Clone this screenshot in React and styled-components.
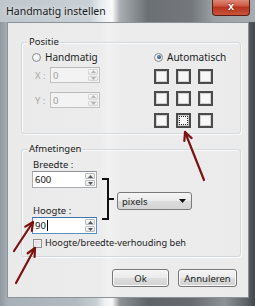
import React from "react";
import styled, { createGlobalStyle } from "styled-components";

const GlobalStyle = createGlobalStyle`
  html, body {
    margin: 0;
    padding: 0;
    background: #ffffff;
  }
  body {
    font-family: "Noto Sans", "Open Sans", sans-serif;
    color: #1b1b1b;
  }
`;

const arrows = [
  { from: [204, 180], to: [185, 132] },
  { from: [14, 251], to: [33, 222] },
  { from: [16, 283], to: [35, 248] },
];

function barbs(from, to, len = 9, spread = 0.45) {
  const dx = from[0] - to[0];
  const dy = from[1] - to[1];
  const a = Math.atan2(dy, dx);
  const p1 = [to[0] + len * Math.cos(a + spread), to[1] + len * Math.sin(a + spread)];
  const p2 = [to[0] + len * Math.cos(a - spread), to[1] + len * Math.sin(a - spread)];
  return `M${p1[0]} ${p1[1]} L${to[0]} ${to[1]} L${p2[0]} ${p2[1]}`;
}

function SpinBox({ value, width, height, disabled, focused }) {
  return (
    <Spin $width={width} $height={height} $disabled={disabled} $focused={focused}>
      <SpinText $disabled={disabled}>
        {value}
        {focused && <Caret />}
      </SpinText>
      <SpinButtons>
        <SpinButton $disabled={disabled}>
          <svg width="5" height="3" viewBox="0 0 5 3">
            <path d="M0 3 L2.5 0 L5 3 Z" fill={disabled ? "#b5b5b5" : "#555"} />
          </svg>
        </SpinButton>
        <SpinButton $disabled={disabled}>
          <svg width="5" height="3" viewBox="0 0 5 3">
            <path d="M0 0 L2.5 3 L5 0 Z" fill={disabled ? "#b5b5b5" : "#555"} />
          </svg>
        </SpinButton>
      </SpinButtons>
    </Spin>
  );
}

export default function App() {
  return (
    <>
      <GlobalStyle />
      <Window>
        <TitleBar>
          <Title>Handmatig instellen</Title>
          <CloseButton>x</CloseButton>
        </TitleBar>
        <Frame>
          <Client>
            <Positie>
              <Legend>Positie</Legend>
              <LeftCol>
                <RadioRow>
                  <Radio />
                  <RadioText>Handmatig</RadioText>
                </RadioRow>
                <AxisRow>
                  <AxisLabel>X :</AxisLabel>
                  <SpinBox value="0" width={50} height={16} disabled />
                </AxisRow>
                <AxisRow $gap={9}>
                  <AxisLabel>Y :</AxisLabel>
                  <SpinBox value="0" width={50} height={16} disabled />
                </AxisRow>
              </LeftCol>
              <RightCol>
                <RadioRow>
                  <Radio $checked />
                  <RadioText>Automatisch</RadioText>
                </RadioRow>
                <AnchorGrid>
                  {Array.from({ length: 9 }).map((_, i) => (
                    <Anchor key={i} $selected={i === 7} />
                  ))}
                </AnchorGrid>
              </RightCol>
            </Positie>

            <Afmetingen>
              <Legend>Afmetingen</Legend>
              <SizeRow>
                <Fields>
                  <FieldLabel>Breedte :</FieldLabel>
                  <SpinBox value="600" width={65} height={17} />
                  <FieldLabel $gap={17}>Hoogte :</FieldLabel>
                  <SpinBox value="90" width={65} height={17} focused />
                </Fields>
                <Bracket />
                <Select>
                  <span>pixels</span>
                  <svg width="7" height="4" viewBox="0 0 7 4">
                    <path d="M0 0 L7 0 L3.5 4 Z" fill="#111" />
                  </svg>
                </Select>
              </SizeRow>
              <CheckRow>
                <CheckBox />
                <CheckText>Hoogte/breedte-verhouding behouden</CheckText>
              </CheckRow>
            </Afmetingen>

            <ButtonRow>
              <Button $width={57}>Ok</Button>
              <Button $width={59}>Annuleren</Button>
            </ButtonRow>
          </Client>
        </Frame>

        <Annotations width="255" height="306" viewBox="0 0 255 306">
          {arrows.map((a, i) => (
            <g key={i} stroke="#7c1212" strokeWidth="2.2" fill="none" strokeLinecap="round">
              <path d={`M${a.from[0]} ${a.from[1]} L${a.to[0]} ${a.to[1]}`} />
              <path d={barbs(a.from, a.to)} strokeLinejoin="round" />
            </g>
          ))}
        </Annotations>
      </Window>
    </>
  );
}

// ==== window chrome ====
const Window = styled.div`
  position: relative;
  width: 255px;
  height: 306px;
  display: flex;
  flex-direction: column;
  overflow: hidden;
  background: linear-gradient(
    90deg,
    #8f989e 0%,
    #a7b0b6 3%,
    #b3bbc0 30%,
    #c9d0d4 38%,
    #eef1f2 41%,
    #f7f8f9 44%,
    #8d9296 47%,
    #5f6469 58%,
    #676b6f 75%,
    #8c9296 88%,
    #5b6065 97%,
    #43474b 100%
  );
`;

const TitleBar = styled.div`
  height: 22px;
  display: flex;
  align-items: flex-start;
  padding-left: 6px;
  background: linear-gradient(
    90deg,
    #bfc7cc 0%,
    #c9d0d5 35%,
    #e9edef 40%,
    #fafbfb 44%,
    #a9aeb2 47%,
    #6b7075 58%,
    #74787c 75%,
    #9ba1a5 84%,
    #a6acb0 100%
  );
`;

const Title = styled.div`
  font-size: 10.5px;
  line-height: 22px;
  color: #1a1a1a;
  text-shadow: 0 0 6px rgba(255, 255, 255, 0.9);
`;

const CloseButton = styled.div`
  margin-left: auto;
  margin-right: 5px;
  margin-top: -2px;
  width: 38px;
  height: 18px;
  box-sizing: border-box;
  border: 1px solid #5a1c15;
  border-top: none;
  border-radius: 0 0 4px 4px;
  background: linear-gradient(180deg, #e09a8c 0%, #cf5a45 45%, #b83420 55%, #c9553c 100%);
  color: #ffffff;
  font-family: "Liberation Sans", sans-serif;
  font-weight: bold;
  font-size: 11px;
  line-height: 16px;
  text-align: center;
  text-shadow: 0 0 2px #5a1008;
`;

const Frame = styled.div`
  flex: 1;
  display: flex;
  padding: 0 6px 8px 7px;
`;

const Client = styled.div`
  flex: 1;
  display: flex;
  flex-direction: column;
  border: 1px solid #8a939a;
  background: linear-gradient(
    90deg,
    #eaeaea 0%,
    #ececec 38%,
    #f1f1f1 42%,
    #ececec 47%,
    #ebebeb 100%
  );
  padding: 19px 7px 10px 13px;
`;

// ==== group boxes ====
const Group = styled.div`
  position: relative;
  box-sizing: border-box;
  border: 1px solid #d3d8dc;
  border-radius: 3px;
  box-shadow: inset 1px 1px 0 #fbfbfb, 1px 1px 0 #fbfbfb;
  padding: 9px 0 0 10px;
`;

const Positie = styled(Group)`
  height: 92px;
  display: flex;
`;

const Afmetingen = styled(Group)`
  height: 108px;
  margin-top: 15px;
  display: flex;
  flex-direction: column;
`;

const Legend = styled.span`
  position: absolute;
  top: -7px;
  left: 6px;
  padding: 0 1px;
  background: #ececec;
  font-size: 9.5px;
  line-height: 12px;
`;

const LeftCol = styled.div`
  width: 122px;
  display: flex;
  flex-direction: column;
`;

const RightCol = styled.div`
  display: flex;
  flex-direction: column;
`;

const RadioRow = styled.div`
  height: 10px;
  display: flex;
  align-items: center;
  gap: 4px;
`;

const Radio = styled.span`
  position: relative;
  width: 9px;
  height: 9px;
  box-sizing: border-box;
  border-radius: 50%;
  border: 1px solid #8b8d8f;
  background: radial-gradient(circle at 40% 40%, #ffffff 0%, #dcdcdc 100%);

  &::after {
    content: "";
    display: ${(p) => (p.$checked ? "block" : "none")};
    position: absolute;
    left: 1.5px;
    top: 1.5px;
    width: 4px;
    height: 4px;
    border-radius: 50%;
    background: radial-gradient(circle at 40% 35%, #6f9cc4 0%, #1f3f5f 80%);
  }
`;

const RadioText = styled.span`
  font-size: 10px;
  line-height: 10px;
`;

const AxisRow = styled.div`
  display: flex;
  align-items: center;
  margin-top: ${(p) => p.$gap || 5}px;
`;

const AxisLabel = styled.span`
  width: 15px;
  padding-left: 3px;
  font-size: 9.5px;
  color: #a9a9a9;
`;

// ==== spin boxes ====
const Spin = styled.div`
  width: ${(p) => p.$width}px;
  height: ${(p) => p.$height}px;
  box-sizing: border-box;
  display: flex;
  border: 1px solid ${(p) => (p.$focused ? "#5d8fc0" : p.$disabled ? "#bfc2c5" : "#a9adb2")};
  border-top-color: ${(p) => (p.$focused ? "#3d74ad" : p.$disabled ? "#b6babd" : "#8e9297")};
  background: ${(p) => (p.$disabled ? "#f3f3f3" : "#ffffff")};
`;

const SpinText = styled.div`
  flex: 1;
  display: flex;
  align-items: center;
  padding-left: 2px;
  font-size: 9.5px;
  color: ${(p) => (p.$disabled ? "#9c9c9c" : "#111")};
`;

const Caret = styled.span`
  width: 1px;
  height: 11px;
  margin-left: 1px;
  background: #000;
`;

const SpinButtons = styled.div`
  width: 10px;
  display: flex;
  flex-direction: column;
  gap: 1px;
  padding: 1px 1px 1px 0;
`;

const SpinButton = styled.div`
  flex: 1;
  display: flex;
  align-items: center;
  justify-content: center;
  border: 1px solid ${(p) => (p.$disabled ? "#d4d6d8" : "#b9bcc0")};
  border-radius: 1px;
  background: linear-gradient(180deg, #fafafa 0%, #e6e6e6 100%);
`;

// ==== anchor grid ====
const AnchorGrid = styled.div`
  margin-top: 7px;
  display: grid;
  grid-template-columns: repeat(3, 15px);
  grid-auto-rows: 15px;
  gap: 7px;
`;

const Anchor = styled.div`
  position: relative;
  box-sizing: border-box;
  border: 2px solid #4b4b4b;
  box-shadow: inset 0 0 0 1px #d0d0d0;
  background: #f7f7f7;

  &::after {
    content: "";
    display: ${(p) => (p.$selected ? "block" : "none")};
    position: absolute;
    inset: 1px;
    border: 1px dotted #222;
  }
`;

// ==== size fields ====
const SizeRow = styled.div`
  display: flex;
  align-items: flex-start;
`;

const Fields = styled.div`
  display: flex;
  flex-direction: column;
`;

const FieldLabel = styled.div`
  height: 12px;
  margin-top: ${(p) => p.$gap || 0}px;
  padding-left: 1px;
  font-size: 9.5px;
  line-height: 12px;
`;

const Bracket = styled.div`
  position: relative;
  margin-left: 5px;
  margin-top: 19px;
  width: 7px;
  height: 42px;
  box-sizing: border-box;
  border: 2px solid #111;
  border-left: none;

  &::after {
    content: "";
    position: absolute;
    right: -7px;
    top: 18px;
    width: 6px;
    height: 2px;
    background: #111;
  }
`;

const Select = styled.div`
  margin-left: 8px;
  margin-top: 33px;
  width: 75px;
  height: 18px;
  box-sizing: border-box;
  display: flex;
  align-items: center;
  justify-content: space-between;
  padding: 0 5px 0 4px;
  border: 1px solid #7a7a7a;
  border-radius: 3px;
  background: linear-gradient(180deg, #f6f6f6 0%, #ebebeb 48%, #dcdcdc 52%, #d4d4d4 100%);
  font-size: 9.5px;
`;

const CheckRow = styled.div`
  margin-top: 3px;
  padding-left: 1px;
  display: flex;
  align-items: center;
  gap: 3px;
`;

const CheckBox = styled.span`
  width: 9px;
  height: 9px;
  box-sizing: border-box;
  border: 1px solid #8e8f90;
  background: linear-gradient(135deg, #d8d8d8 0%, #f4f4f4 100%);
  box-shadow: inset 0 0 0 1px #f0f0f0;
`;

const CheckText = styled.span`
  width: 141px;
  overflow: hidden;
  white-space: nowrap;
  font-size: 9.2px;
  line-height: 12px;
`;

// ==== buttons ====
const ButtonRow = styled.div`
  margin-top: 12px;
  padding-right: 4px;
  display: flex;
  justify-content: flex-end;
  gap: 9px;
`;

const Button = styled.div`
  width: ${(p) => p.$width}px;
  height: 18px;
  box-sizing: border-box;
  display: flex;
  align-items: center;
  justify-content: center;
  border: 1px solid #777;
  border-radius: 3px;
  background: linear-gradient(180deg, #f4f4f4 0%, #ebebeb 48%, #dddddd 52%, #d2d2d2 100%);
  box-shadow: inset 0 0 0 1px #fafafa;
  font-size: 9.5px;
`;

const Annotations = styled.svg`
  position: absolute;
  left: 0;
  top: 0;
  pointer-events: none;
`;
